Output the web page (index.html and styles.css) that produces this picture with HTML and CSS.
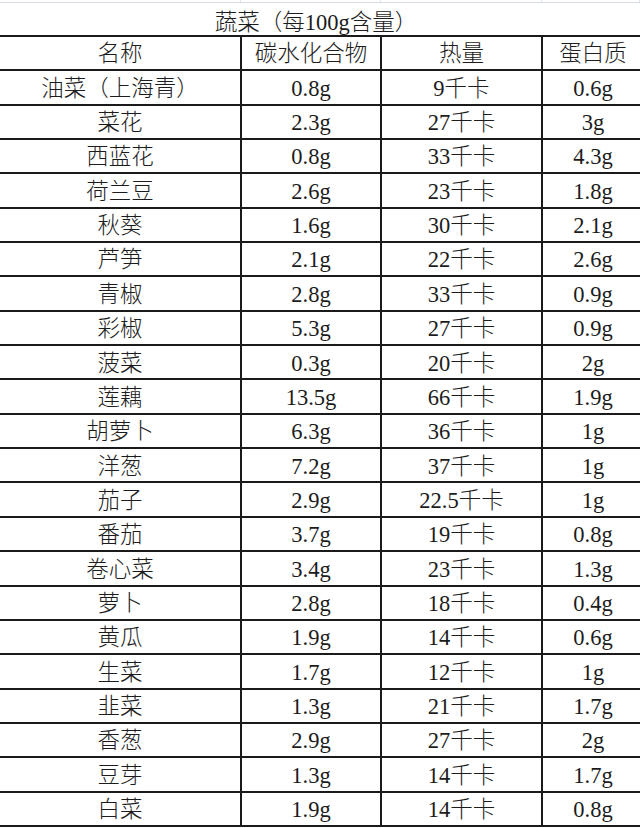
FILE: index.html
```html
<!DOCTYPE html>
<html lang="zh">
<head>
<meta charset="utf-8">
<title>蔬菜（每100g含量）</title>
<link rel="stylesheet" href="styles.css">
</head>
<body>
<div class="gridtop"><span></span><span></span><span></span><span></span></div>
<div class="title">蔬菜（每100g含量）</div>
<div class="sheet">
  <div class="c">名称</div><div class="c">碳水化合物</div><div class="c">热量</div><div class="c">蛋白质</div>
  <div class="c">油菜（上海青）</div><div class="c">0.8g</div><div class="c">9千卡</div><div class="c">0.6g</div>
  <div class="c">菜花</div><div class="c">2.3g</div><div class="c">27千卡</div><div class="c">3g</div>
  <div class="c">西蓝花</div><div class="c">0.8g</div><div class="c">33千卡</div><div class="c">4.3g</div>
  <div class="c">荷兰豆</div><div class="c">2.6g</div><div class="c">23千卡</div><div class="c">1.8g</div>
  <div class="c">秋葵</div><div class="c">1.6g</div><div class="c">30千卡</div><div class="c">2.1g</div>
  <div class="c">芦笋</div><div class="c">2.1g</div><div class="c">22千卡</div><div class="c">2.6g</div>
  <div class="c">青椒</div><div class="c">2.8g</div><div class="c">33千卡</div><div class="c">0.9g</div>
  <div class="c">彩椒</div><div class="c">5.3g</div><div class="c">27千卡</div><div class="c">0.9g</div>
  <div class="c">菠菜</div><div class="c">0.3g</div><div class="c">20千卡</div><div class="c">2g</div>
  <div class="c">莲藕</div><div class="c">13.5g</div><div class="c">66千卡</div><div class="c">1.9g</div>
  <div class="c">胡萝卜</div><div class="c">6.3g</div><div class="c">36千卡</div><div class="c">1g</div>
  <div class="c">洋葱</div><div class="c">7.2g</div><div class="c">37千卡</div><div class="c">1g</div>
  <div class="c">茄子</div><div class="c">2.9g</div><div class="c">22.5千卡</div><div class="c">1g</div>
  <div class="c">番茄</div><div class="c">3.7g</div><div class="c">19千卡</div><div class="c">0.8g</div>
  <div class="c">卷心菜</div><div class="c">3.4g</div><div class="c">23千卡</div><div class="c">1.3g</div>
  <div class="c">萝卜</div><div class="c">2.8g</div><div class="c">18千卡</div><div class="c">0.4g</div>
  <div class="c">黄瓜</div><div class="c">1.9g</div><div class="c">14千卡</div><div class="c">0.6g</div>
  <div class="c">生菜</div><div class="c">1.7g</div><div class="c">12千卡</div><div class="c">1g</div>
  <div class="c">韭菜</div><div class="c">1.3g</div><div class="c">21千卡</div><div class="c">1.7g</div>
  <div class="c">香葱</div><div class="c">2.9g</div><div class="c">27千卡</div><div class="c">2g</div>
  <div class="c">豆芽</div><div class="c">1.3g</div><div class="c">14千卡</div><div class="c">1.7g</div>
  <div class="c">白菜</div><div class="c">1.9g</div><div class="c">14千卡</div><div class="c">0.8g</div>
</div>
</body>
</html>
```
FILE: styles.css
```css
html, body {
  margin: 0;
  padding: 0;
  background: #ffffff;
  overflow: hidden;
}

body {
  width: 640px;
  height: 828px;
  font-family: "Liberation Serif", "Noto Sans CJK SC", serif;
  font-weight: 300;
  color: #1c1c1c;
}

.gridtop {
  display: grid;
  grid-template-columns: 241px 140px 161px 98px;
  height: 2px;
  border-bottom: 1px solid #d5dce6;
}

.gridtop span {
  border-right: 1px solid #dfe4ec;
}

.title {
  height: 32px;
  display: flex;
  align-items: center;
  justify-content: center;
  font-size: 22.5px;
  padding-top: 1px;
  box-sizing: border-box;
  padding-right: 8px;
}

.sheet {
  display: grid;
  grid-template-columns: 240px 138px 159px 100px;
  grid-auto-rows: 32.35px;
  gap: 2px;
  padding: 2px;
  margin-left: -2px;
  width: max-content;
  background: #1a1a1a;
}

.c {
  background: #ffffff;
  display: flex;
  align-items: center;
  justify-content: center;
  font-size: 22.5px;
  line-height: 1;
  padding-top: 3px;
  box-sizing: border-box;
  white-space: nowrap;
}
```
